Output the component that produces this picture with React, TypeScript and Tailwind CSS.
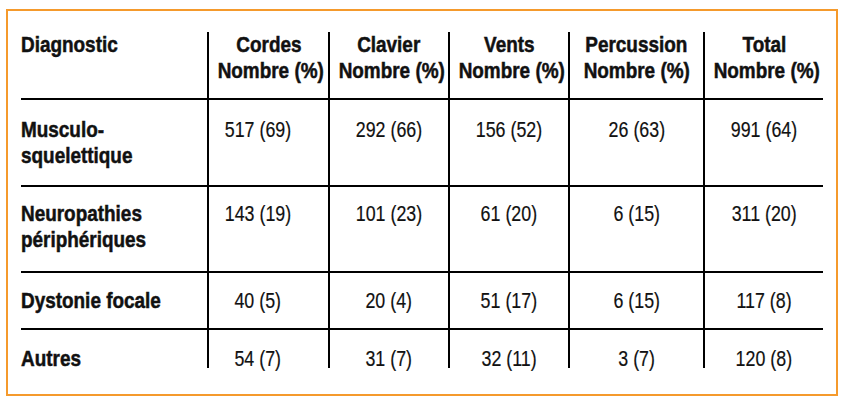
import React from 'react';

const cols = 'grid grid-cols-[186px_121px_120px_120px_135px_120px]';

const headers = ['Cordes', 'Clavier', 'Vents', 'Percussion', 'Total'];

const rows = [
  { label: ['Musculo-', 'squelettique'], values: ['517 (69)', '292 (66)', '156 (52)', '26 (63)', '991 (64)'], h: 'h-[87px] pt-[17px] border-b-2' },
  { label: ['Neuropathies', 'périphériques'], values: ['143 (19)', '101 (23)', '61 (20)', '6 (15)', '311 (20)'], h: 'h-[86px] pt-[14px] border-b-2' },
  { label: ['Dystonie focale'], values: ['40 (5)', '20 (4)', '51 (17)', '6 (15)', '117 (8)'], h: 'h-[57px] pt-[15px] border-b-2' },
  { label: ['Autres'], values: ['54 (7)', '31 (7)', '32 (11)', '3 (7)', '120 (8)'], h: 'h-[38px] pt-[16px]' },
];

// condensed look: no narrow face installed, so squeeze Liberation Sans
const Bold = ({ children, left }: { children: React.ReactNode; left?: boolean }) => (
  <div>
    <span className={`inline-block whitespace-nowrap font-bold [-webkit-text-stroke:0.5px_#111] scale-x-[0.86] ${left ? 'origin-left' : 'origin-center'}`}>
      {children}
    </span>
  </div>
);

const App = () => {
  return (
    <div className="w-[844px] h-[401px] bg-white pt-[9px] pl-[6px] font-['Liberation_Sans',Arial,sans-serif] text-[#111] text-[22px] leading-[26px]">
      <div className="w-[832px] h-[387px] border-2 border-[#f59a2c] pt-[21px] pl-[13px]">
        <div className="w-[802px]">
          {/* Header */}
          <div className={`${cols} h-[68px] border-b-2 border-black`}>
            <div>
              <Bold left>Diagnostic</Bold>
            </div>
            {headers.map((h) => (
              <div key={h} className="border-l-2 border-black text-center">
                <Bold>{h}</Bold>
                <Bold>Nombre (%)</Bold>
              </div>
            ))}
          </div>

          {/* Body */}
          {rows.map((row, i) => (
            <div key={i} className={`${cols} border-black`}>
              <div className={`${row.h} border-black`}>
                {row.label.map((l) => (
                  <Bold key={l} left>
                    {l}
                  </Bold>
                ))}
              </div>
              {row.values.map((v, j) => (
                <div key={j} className={`${row.h} border-l-2 border-black text-center ${j === 0 ? 'pr-[22px]' : ''}`}>
                  <span className="inline-block whitespace-nowrap [-webkit-text-stroke:0.2px_#111] scale-x-[0.81] origin-center">{v}</span>
                </div>
              ))}
            </div>
          ))}
        </div>
      </div>
    </div>
  );
};

export default App;
